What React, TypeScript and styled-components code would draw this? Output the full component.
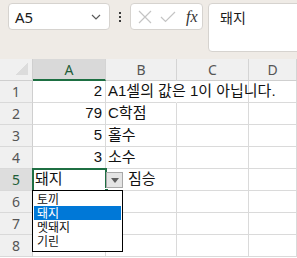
import React from "react";
import styled, { createGlobalStyle } from "styled-components";

const GlobalStyle = createGlobalStyle`
  html, body {
    margin: 0;
    padding: 0;
    background: #ffffff;
    overflow: hidden;
  }
  * {
    box-sizing: border-box;
  }
`;

const UI_FONT = `"Noto Sans", "Noto Sans CJK KR", sans-serif`;
const CELL_FONT = `"Liberation Sans", "Noto Sans CJK KR", sans-serif`;

const COLS = ["A", "B", "C", "D"];

type Row = { a?: string; b?: string; bIndent?: number };

const rows: Row[] = [
  { a: "2", b: "A1셀의 값은 1이 아닙니다." },
  { a: "79", b: "C학점" },
  { a: "5", b: "홀수" },
  { a: "3", b: "소수" },
  { b: "짐승", bIndent: 20 },
  {},
  {},
  {},
];

const options = ["토끼", "돼지", "멧돼지", "기린"];

export default function App() {
  return (
    <Page>
      <GlobalStyle />
      <Toolbar>
        <NameBox>
          <NameText>A5</NameText>
          <svg width="12" height="8" viewBox="0 0 12 8">
            <path d="M2 2 L6 6 L10 2" fill="none" stroke="#5a5a5a" strokeWidth="1.2" />
          </svg>
        </NameBox>
        <Dots>
          <Dot />
          <Dot />
          <Dot />
        </Dots>
        <FxGroup>
          <svg width="14" height="14" viewBox="0 0 14 14">
            <path d="M1 1 L13 13 M13 1 L1 13" stroke="#c4c4c4" strokeWidth="1.2" />
          </svg>
          <svg width="16" height="12" viewBox="0 0 16 12">
            <path d="M1 6 L5.5 10.5 L15 1" fill="none" stroke="#c4c4c4" strokeWidth="1.2" />
          </svg>
          <FxLabel>fx</FxLabel>
        </FxGroup>
        <FormulaBox>돼지</FormulaBox>
      </Toolbar>

      <Sheet>
        <Corner>
          <CornerMark />
        </Corner>
        {COLS.map((c) => (
          <ColHead key={c} $active={c === "A"}>
            {c}
          </ColHead>
        ))}
        {rows.map((r, i) => {
          const n = i + 1;
          const selected = n === 5;
          return (
            <React.Fragment key={n}>
              <RowHead $active={selected}>{n}</RowHead>
              <Cell $align="right" $selected={selected}>
                {selected ? (
                  <>
                    <EditText>돼지</EditText>
                    <Handle />
                    <DropButton>
                      <svg width="8" height="5" viewBox="0 0 8 5">
                        <path d="M0 0 L8 0 L4 5 Z" fill="#5e5e5e" />
                      </svg>
                    </DropButton>
                    <DropList>
                      {options.map((o) => (
                        <DropItem key={o} $active={o === "돼지"}>
                          {o}
                        </DropItem>
                      ))}
                    </DropList>
                  </>
                ) : (
                  r.a
                )}
              </Cell>
              <Cell $align="left" $overflow={n === 1} $indent={r.bIndent}>
                {r.b}
              </Cell>
              <Cell $align="left" />
              <Cell $align="left" />
            </React.Fragment>
          );
        })}
      </Sheet>
    </Page>
  );
}

const Page = styled.div`
  width: 297px;
  height: 258px;
  overflow: hidden;
  display: flex;
  flex-direction: column;
  background: #ffffff;
`;

const Toolbar = styled.div`
  height: 59px;
  flex: none;
  background: #efebe6;
  display: flex;
  align-items: flex-start;
  padding: 3px 0 0 8px;
`;

const NameBox = styled.div`
  width: 102px;
  height: 27px;
  background: #ffffff;
  border: 1px solid #d6d3cf;
  border-radius: 4px;
  display: flex;
  align-items: center;
  justify-content: space-between;
  padding: 0 7px 0 6px;
`;

const NameText = styled.span`
  font-family: ${UI_FONT};
  font-size: 15px;
  color: #1a1a1a;
`;

const Dots = styled.div`
  width: 20px;
  height: 27px;
  display: flex;
  flex-direction: column;
  align-items: center;
  justify-content: center;
  gap: 2px;
`;

const Dot = styled.div`
  width: 2px;
  height: 2px;
  background: #3a3a3a;
`;

const FxGroup = styled.div`
  width: 73px;
  height: 27px;
  background: #ffffff;
  border: 1px solid #d6d3cf;
  border-radius: 4px;
  display: flex;
  align-items: center;
  gap: 8px;
  padding: 0 0 0 7px;
`;

const FxLabel = styled.span`
  font-family: "Liberation Serif", "DejaVu Serif", serif;
  font-style: italic;
  font-size: 16px;
  color: #333333;
  margin-left: 2px;
`;

const FormulaBox = styled.div`
  margin-left: 5px;
  flex: 1;
  min-width: 100px;
  height: 49px;
  margin-right: -20px;
  background: #ffffff;
  border: 1px solid #d6d3cf;
  border-radius: 4px;
  padding: 3px 0 0 11px;
  font-family: ${UI_FONT};
  font-size: 14px;
  color: #1a1a1a;
`;

const Sheet = styled.div`
  display: grid;
  grid-template-columns: 33px 73px 71px 72px 1fr;
  grid-template-rows: 22px;
  grid-auto-rows: 22px;
  font-family: ${CELL_FONT};
`;

const Corner = styled.div`
  background: #f0f0f0;
  border-right: 1px solid #cfcfcf;
  border-bottom: 1px solid #cfcfcf;
  display: flex;
  align-items: flex-end;
  justify-content: flex-end;
  padding: 0 4px 5px 0;
`;

const CornerMark = styled.div`
  width: 13px;
  height: 13px;
  background: linear-gradient(135deg, transparent 50%, #dcdcdc 50%);
`;

const ColHead = styled.div<{ $active: boolean }>`
  background: ${(p) => (p.$active ? "#d9d9d9" : "#f0f0f0")};
  border-right: 1px solid #d4d4d4;
  border-bottom: ${(p) => (p.$active ? "2px solid #1d6f42" : "1px solid #cfcfcf")};
  display: flex;
  align-items: center;
  justify-content: center;
  font-family: ${UI_FONT};
  font-size: 14px;
  color: ${(p) => (p.$active ? "#1e5e38" : "#555555")};
`;

const RowHead = styled.div<{ $active: boolean }>`
  background: ${(p) => (p.$active ? "#dddddd" : "#f0f0f0")};
  border-right: 1px solid #cfcfcf;
  border-bottom: 1px solid #d9d9d9;
  display: flex;
  align-items: center;
  justify-content: center;
  font-family: ${UI_FONT};
  font-size: 14px;
  color: ${(p) => (p.$active ? "#1e5e38" : "#555555")};
`;

const Cell = styled.div<{
  $align: "left" | "right";
  $selected?: boolean;
  $overflow?: boolean;
  $indent?: number;
}>`
  position: relative;
  border-right: ${(p) => (p.$overflow ? "1px solid transparent" : "1px solid #dadada")};
  border-bottom: 1px solid #dadada;
  display: flex;
  align-items: flex-end;
  justify-content: ${(p) => (p.$align === "right" ? "flex-end" : "flex-start")};
  padding: 0 3px 1px ${(p) => 2 + (p.$indent || 0)}px;
  font-size: 15px;
  line-height: 20px;
  color: #111111;
  white-space: nowrap;
  overflow: ${(p) => (p.$overflow ? "visible" : "hidden")};
  z-index: ${(p) => (p.$selected ? 3 : p.$overflow ? 2 : 1)};
  outline: ${(p) => (p.$selected ? "2px solid #1f6f43" : "none")};
  outline-offset: -1px;
  ${(p) => (p.$selected ? "overflow: visible;" : "")}
`;

const EditText = styled.span`
  margin-right: auto;
  font-size: 15px;
`;

const Handle = styled.div`
  position: absolute;
  right: -4px;
  bottom: -3px;
  width: 5px;
  height: 5px;
  background: #1f6f43;
  border: 1px solid #ffffff;
`;

const DropButton = styled.div`
  position: absolute;
  left: 100%;
  top: 3px;
  margin-left: 1px;
  width: 17px;
  height: 16px;
  background: #e4e4e4;
  border: 1px solid #a8a8a8;
  display: flex;
  align-items: center;
  justify-content: center;
`;

const DropList = styled.div`
  position: absolute;
  left: -1px;
  top: 100%;
  width: 91px;
  background: #ffffff;
  border: 1px solid #000000;
  padding: 1px 1px 3px;
  display: flex;
  flex-direction: column;
`;

const DropItem = styled.div<{ $active: boolean }>`
  height: 14px;
  line-height: 14px;
  padding-left: 3px;
  font-family: "Noto Sans CJK KR", sans-serif;
  font-size: 12px;
  background: ${(p) => (p.$active ? "#0078d7" : "transparent")};
  color: ${(p) => (p.$active ? "#ffffff" : "#111111")};
`;
